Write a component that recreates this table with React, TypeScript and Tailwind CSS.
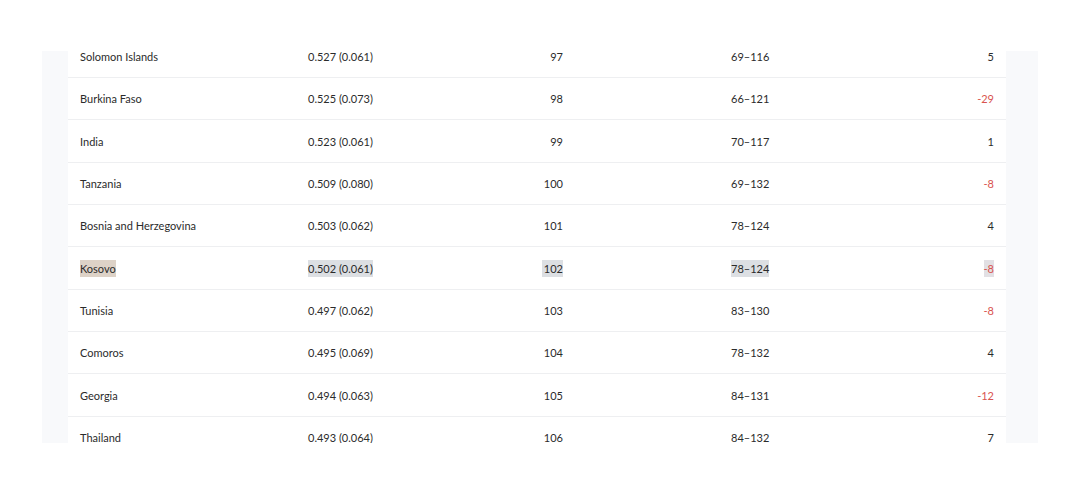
const rows = [
  { name: 'Solomon Islands', score: '0.527 (0.061)', rank: '97', range: '69–116', change: '5' },
  { name: 'Burkina Faso', score: '0.525 (0.073)', rank: '98', range: '66–121', change: '-29' },
  { name: 'India', score: '0.523 (0.061)', rank: '99', range: '70–117', change: '1' },
  { name: 'Tanzania', score: '0.509 (0.080)', rank: '100', range: '69–132', change: '-8' },
  { name: 'Bosnia and Herzegovina', score: '0.503 (0.062)', rank: '101', range: '78–124', change: '4' },
  { name: 'Kosovo', score: '0.502 (0.061)', rank: '102', range: '78–124', change: '-8', selected: true },
  { name: 'Tunisia', score: '0.497 (0.062)', rank: '103', range: '83–130', change: '-8' },
  { name: 'Comoros', score: '0.495 (0.069)', rank: '104', range: '78–132', change: '4' },
  { name: 'Georgia', score: '0.494 (0.063)', rank: '105', range: '84–131', change: '-12' },
  { name: 'Thailand', score: '0.493 (0.064)', rank: '106', range: '84–132', change: '7' },
];

export default function App() {
  return (
    <div className="w-[1080px] h-[487px] bg-white pt-[51px] px-[42px] font-['Lato',sans-serif] text-[11px] text-[#2b2b2b]">
      {/* scrolled panel */}
      <div className="h-[392px] overflow-hidden bg-[#f8f9fb] pl-[26px] pr-[32px]">
        <div className="-mt-[15.4px] bg-white">
          {rows.map((r) => {
            const neg = r.change.startsWith('-');
            const sel = r.selected;
            return (
              <div
                key={r.name}
                className="grid grid-cols-[228px_140px_139px_144px_150px_1fr] items-center h-[42.33px] pt-[2px] border-b border-[#eeeff1]"
              >
                <div className="pl-3">
                  <span className={sel ? 'bg-[#ddd2c7] py-[2px]' : ''}>{r.name}</span>
                </div>
                <div className="pl-3">
                  <span className={sel ? 'bg-[#dcdfe3] py-[2px]' : ''}>{r.score}</span>
                </div>
                <div className="pr-3 text-right">
                  <span className={sel ? 'bg-[#dcdfe3] py-[2px] pl-[2px]' : ''}>{r.rank}</span>
                </div>
                <div />
                <div className="pl-3">
                  <span className={sel ? 'bg-[#dcdfe3] py-[2px]' : ''}>{r.range}</span>
                </div>
                <div className={`pr-3 text-right ${neg ? 'text-[#d9534f]' : ''}`}>
                  <span className={sel ? 'bg-[#e2e0e4] py-[2px]' : ''}>{r.change}</span>
                </div>
              </div>
            );
          })}
        </div>
      </div>
    </div>
  );
}
